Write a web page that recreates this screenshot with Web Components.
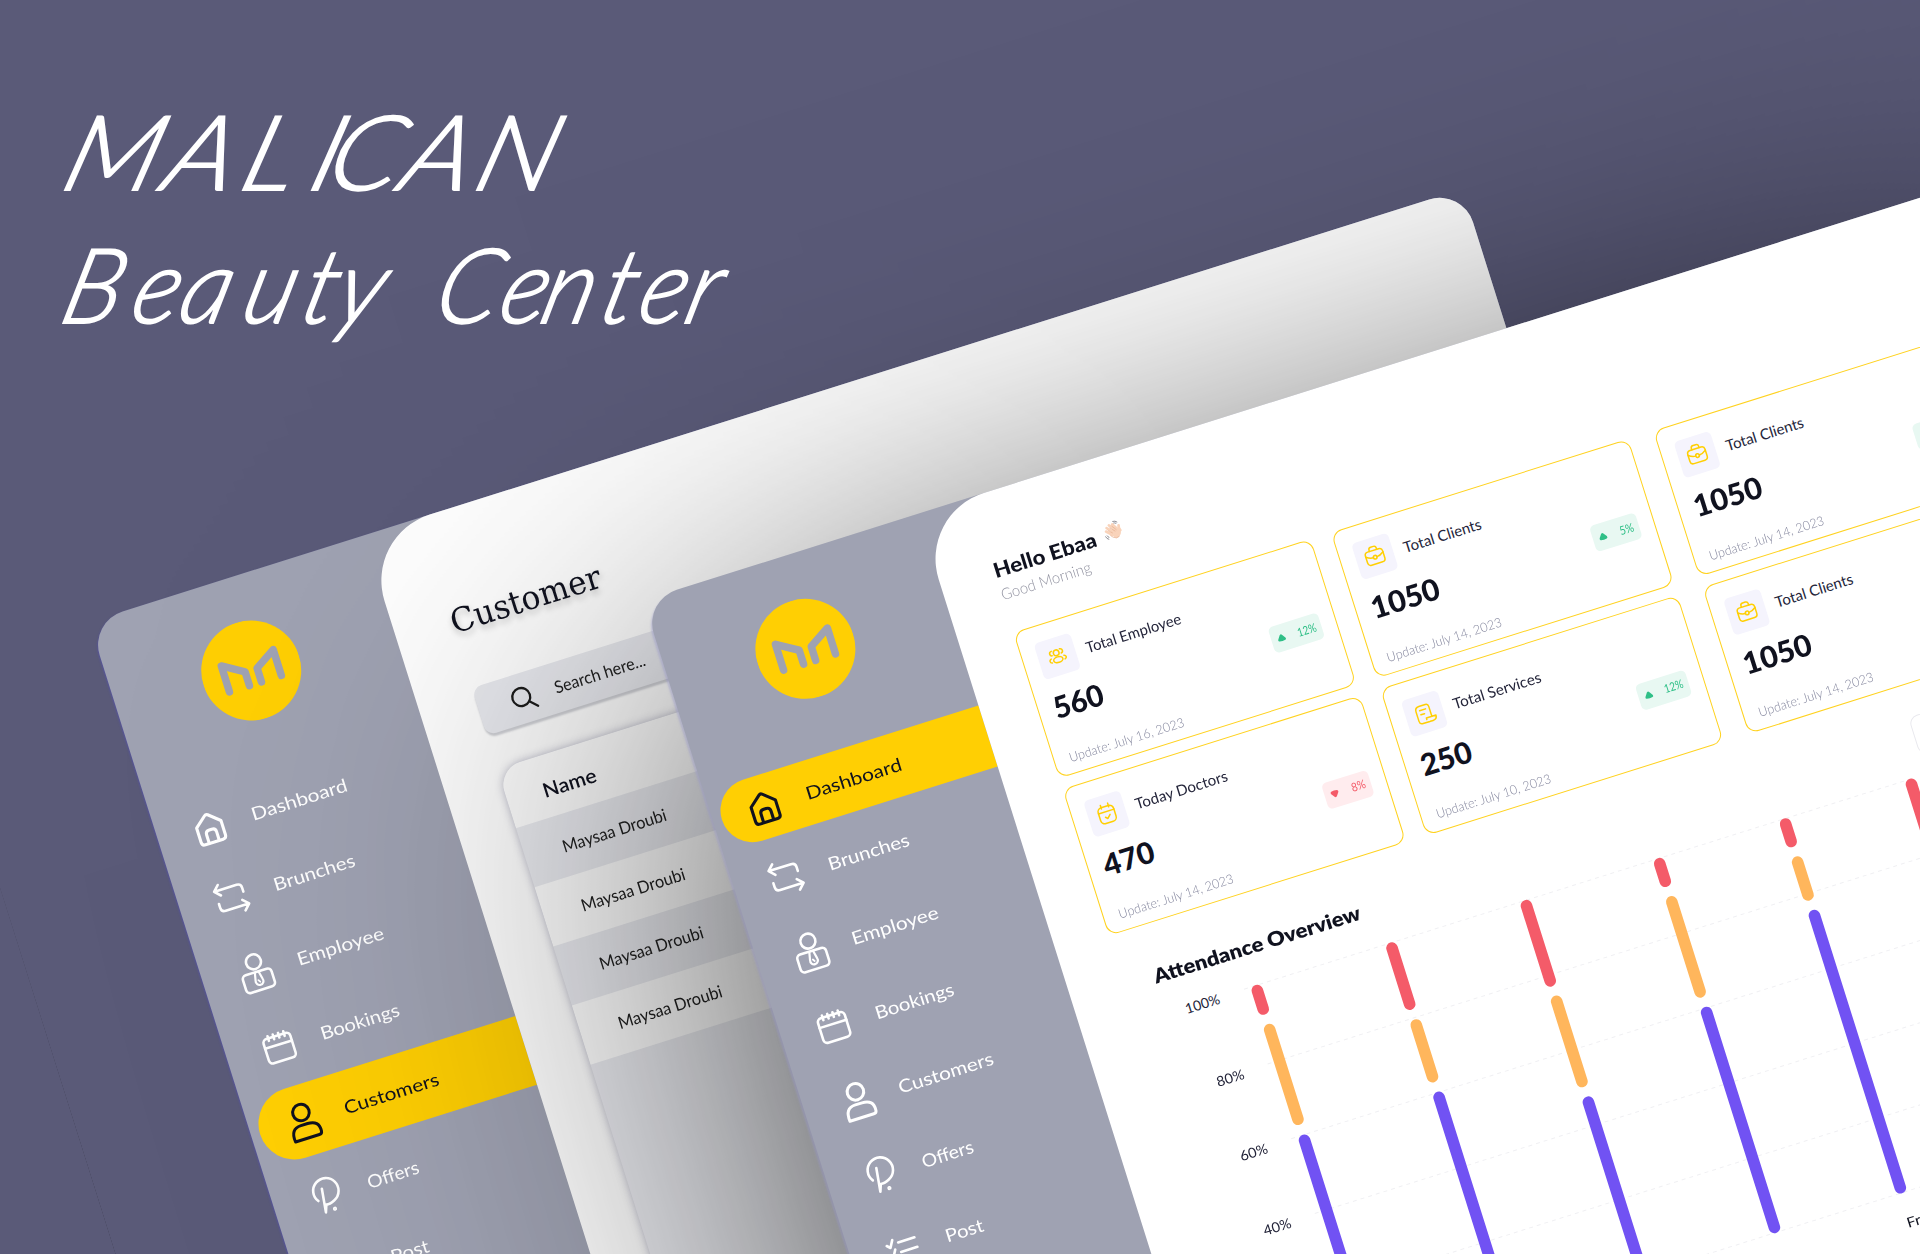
<!DOCTYPE html>
<html lang="en">
<head>
<meta charset="utf-8">
<title>MALICAN Beauty Center</title>
<style>
html,body{margin:0;padding:0}
body{width:1920px;height:1254px;overflow:hidden;background:#5a5a78;font-family:Lato,"Open Sans",sans-serif;color:#10121f}
</style>
</head>
<body>
<hero-scene></hero-scene>
<script>
const ICONS = {
  home:'<path d="M6.500 17 17.800 7.500q1.500-1.300 3.200 0L32 17V32q0 3.500-3.500 3.500H10q-3.500 0-3.500-3.500Z" stroke-width="3.100"/><path d="M14 35V26.500q0-4 4-4h2.500q4 0 4 4v8.500" stroke-width="3.100"/>',
  swap:'<path d="M32 17.500v-4q0-4.500-4.500-4.500H4.500M9.500 3.500 4 9l5.500 5.500M5 22v4q0 4.500 4.500 4.500H33.500M28.500 25l5.500 5.500-5.500 5.500" stroke-width="2.600"/>',
  employee:'<circle cx="20.500" cy="9.500" r="7.500"/><rect x="5" y="20" width="30" height="18.500" rx="4"/><path d="M18.500 20.500 16.800 28.500a3.900 3.900 0 1 0 7.400 0L22.500 20.500" stroke-width="2.200"/><path d="m19.700 28.500 1.300 2" stroke-width="1.800"/>',
  calendar:'<rect x="5.500" y="9" width="28" height="25.500" rx="4"/><path d="M5.500 18h28M11.500 6.700v4.800M17 6.700v4.800M22.500 6.700v4.800M28 6.700v4.800"/>',
  user:'<circle cx="20.500" cy="11.500" r="8.300" stroke-width="3"/><path d="M6.500 38q-1.500-14 10-14h7q12 0 11 11.500-.3 2.500-3 2.500Z" stroke-width="3"/>',
  offers:'<path d="M10.500 23.200A12.700 12.700 0 1 1 26 27.200Q20.500 29.800 17 29L14.300 36.300 17.500 12.500"/><circle cx="24" cy="35.500" r=".8" fill="currentColor"/>',
  post:'<path d="m4 12 3 3 4-7M16 12h17M4 22l3 3 4-7M16 22h17M4 32l3 3 4-7M16 32h17"/>',
  people:'<circle cx="20" cy="16" r="3"/><ellipse cx="20" cy="23.500" rx="5" ry="3"/><path d="M15.500 13q-2.500.3-2.500 2.400t2 2.400M24.500 13q2.500.3 2.500 2.400t-2 2.400M13 20.800q-1.900.5-1.900 2.100t1.900 2.100M27 20.800q1.900.5 1.900 2.100t-1.900 2.100" />',
  bag:'<rect x="10.500" y="13.500" width="19" height="14.500" rx="3.500"/><path d="M16 13.500v-1.500q0-2.500 2.500-2.500h3q2.500 0 2.500 2.500v1.500M10.500 18q4 3 7.500 3M29.500 18q-4 3-7.500 3"/><circle cx="20" cy="21" r="1.900"/>',
  check:'<rect x="11.500" y="12" width="17" height="17.500" rx="4.500"/><path d="M11.500 17.500h17M16 9.500v4M24 9.500v4M17.500 23l2 2 3.500-3.500"/>',
  scroll:'<path d="M23 29.500h-7.500q-3.500 0-3.500-3.500V15.500q0-4.500 4.500-4.500h7q3 0 3 3V25M16 15.500h6.500M16 20h4M20.500 26.500v-1.500h10.500q0 4.500-4.500 4.500h-3"/>',
  search:'<circle cx="11.500" cy="11.500" r="9"/><path d="m18 18 7 7"/>'
};
const def = (name, html, after) => customElements.define(name, class extends HTMLElement {
  constructor(){ super(); this.attachShadow({mode:'open'}); }
  connectedCallback(){
    if (this.ready) return; this.ready = true;
    this.shadowRoot.innerHTML = typeof html === 'function' ? html(this) : html;
    if (after) after(this);
  }
});

/* one line of text condensed or widened to an exact width */
def('fit-text', el => `<style>:host{display:inline-block;line-height:1;white-space:nowrap;width:${el.getAttribute('w')}px}
span{display:inline-block;transform-origin:0 50%}</style><span><slot></slot></span>`,
  el => { const s = el.shadowRoot.querySelector('span');
    s.style.transform = `scaleX(${el.getAttribute('w') / s.offsetWidth})`; });

def('ui-icon', el => { const s = el.getAttribute('size') || 40, v = el.getAttribute('box') || 40;
  return `<style>:host{display:block;flex:none;width:${s}px;height:${s}px}svg{display:block;overflow:visible}</style>
<svg width="${s}" height="${s}" viewBox="0 0 ${v} ${v}" fill="none" stroke="currentColor" stroke-width="${el.getAttribute('sw') || 2.6}" stroke-linecap="round" stroke-linejoin="round">${ICONS[el.getAttribute('name')]}</svg>`; });

def('brand-logo', `<style>:host{display:block;width:100px;height:100px}svg{display:block}</style>
<svg width="100" height="100" viewBox="-50 -50 100 100"><circle r="50" fill="#ffcf03"/>
<g fill="none" stroke="#9fa2b2" stroke-width="7.500" stroke-linecap="round" stroke-linejoin="round">
<path d="M-27.200 13.800V-13.300L-6.300-.5V14"/><path d="M27.200 13.800V-13.300L6.300-.5V14"/></g></svg>`);

def('nav-item', el => `<style>
:host{display:flex;align-items:center;height:77.900px;color:#fff;font-size:18px}
:host([first]){height:70.600px}
div{flex:1;display:flex;align-items:center;gap:23px;margin-left:9px;padding-left:25px;height:64px;border-radius:40px 0 0 40px}
:host([active]){color:#10121f}
:host([active]) div{background:#ffcf03;height:${el.getAttribute('tall') || 64}px}
</style><div><ui-icon name="${el.getAttribute('icon')}"></ui-icon><fit-text w="${el.getAttribute('w')}"><slot></slot></fit-text></div>`);

def('side-bar', el => {
  const items = [['home','Dashboard',100],['swap','Brunches',84.500],['employee','Employee',90],['calendar','Bookings',82.500],['user','Customers',99],['offers','Offers',53.500],['post','Post',39.500]];
  const act = el.getAttribute('active');
  return `<style>:host{display:flex;flex-direction:column;width:288.400px;flex:none}
brand-logo{margin:45px 0 52.200px 90px}
</style><brand-logo></brand-logo>` + items.map((i, n) =>
  `<nav-item icon="${i[0]}" w="${i[2]}" ${n ? '' : 'first'} ${i[1] === act ? 'active' : ''} ${n ? 'tall="71.500"' : ''}>${i[1]}</nav-item>`).join(''); });

def('app-window', `<style>
:host{display:flex;position:absolute;width:1440px;height:1300px;border-radius:35px;overflow:visible;background:#9fa2b2}
.panel{flex:1;border-radius:69px 35px 35px 0;background:#fff;min-width:0;box-sizing:border-box}
</style><slot name="side"></slot><div class="panel"><slot></slot></div>`);

/* soft shade of a 1440px wide window: product of a horizontal and a vertical gaussian edge */
def('soft-shade', () => {
  const W = 1440, M = 700;
  const phi = z => 1 / (1 + Math.exp(-1.5976 * z - .07056 * z * z * z));
  const ramp = (len, both, S) => { const lo = phi(-M / S), f = d => Math.max(0, (phi(d / S) - lo) / (1 - 2 * lo)).toFixed(5), out = [];
    for (let d = -M; d <= M; d += 28) out.push(`rgba(0,0,0,${f(d)}) ${M + d}px`);
    if (both) for (let d = M; d >= -M; d -= 28) out.push(`rgba(0,0,0,${f(d)}) ${M + len - d}px`);
    return out.join(','); };
  const m = `linear-gradient(90deg,${ramp(W, true, 225)}),linear-gradient(180deg,${ramp(0, false, 180)})`;
  return `<style>:host{display:block;position:absolute;left:${432.500 - M}px;top:${766.400 + 95 - M}px;width:${W + 2 * M}px;height:2200px;background:rgba(0,0,0,.75);
-webkit-mask-image:${m};-webkit-mask-composite:source-in;mask-image:${m};mask-composite:intersect}</style>`; });

def('customer-view', () => {
  const row = '<div class="row"><fit-text w="108">Maysaa Droubi</fit-text></div>';
  return `<style>
:host{display:flex;flex-direction:column;padding:93.500px 0 0 56.500px}
h1{margin:0;font:400 33px/1 "DejaVu Serif",serif;text-shadow:0 4px 7px rgba(0,0,0,.25)}
.search{margin-top:51.500px;height:50px;width:600px;border-radius:10px;background:#e9eaef;display:flex;align-items:center;padding-left:33px;gap:20px;font-size:17px;color:#222;box-shadow:0 3px 2px #cfd0d5}
.search ui-icon{color:#1c1c1c}
.table{margin-top:35px;width:1000px;height:900px;border-radius:24px;background:#ebecf1;overflow:hidden;box-shadow:0 0 9px rgba(60,60,100,.36)}
.table>div{display:flex;align-items:center;padding-left:39.500px;box-sizing:border-box;height:61.900px;font-size:17px;color:#222}
.table>.head{height:62.500px;font-size:20px;font-weight:600;padding:6px 0 0 37.500px;background:#fff;color:#10121f}
.table>.row:nth-child(odd){background:#fff}
</style><h1><fit-text w="156">Customer</fit-text></h1>
<div class="search"><ui-icon name="search" size="26" box="26" sw="2.300"></ui-icon><fit-text w="95">Search here...</fit-text></div>
<div class="table"><div class="head"><fit-text w="55">Name</fit-text></div>${row.repeat(4)}</div>`; });

def('trend-badge', el => { const down = el.hasAttribute('down'), t = el.getAttribute('value');
  return `<style>:host{display:flex;align-items:center;justify-content:center;gap:${t === '12%' ? 12 : 13}px;box-sizing:border-box;width:${t === '12%' ? 52 : 48}px;height:27px;border-radius:5px;
background:${down ? '#ffecee' : '#e8f8f2'};color:${down ? '#f45b69' : '#2fbf87'};font-size:12px;font-weight:400}svg{display:block}</style>
<svg width="9" height="9" viewBox="0 0 9 9"><path fill="currentColor" stroke="currentColor" stroke-width="3" stroke-linejoin="round" d="${down ? 'M2 2.900q2.500-.8 5 0L4.500 6.400Z' : 'M2 6.300q2.500.8 5 0L4.500 2.700Z'}"/></svg>
${t ? `<fit-text w="${t === '12%' ? 20 : 15}">${t}</fit-text>` : ''}`; });

def('stat-card', el => { const g = k => el.getAttribute(k);
  return `<style>:host{display:flex;flex-direction:column;box-sizing:border-box;width:312.200px;height:153.400px;border:1.200px solid #ffd21f;border-radius:11px;padding:16.500px 15px 0 15px}
.top{display:flex;align-items:center;gap:11px;font-size:15px;color:#24253a}
.ic{width:38px;height:38px;border-radius:5px;background:#f5f4fd;color:#ffcf03;display:flex;align-items:center;justify-content:center}
.mid{display:flex;align-items:center;justify-content:space-between;height:30px;margin-top:15.500px;font-size:30px;font-weight:900}
.mid>fit-text{margin-top:-3px}
.up{margin-top:27px;font-size:13px;font-weight:300;color:#86889f;height:14px}
</style><div class="top"><div class="ic"><ui-icon name="${g('icon')}" size="38" sw="1.600"></ui-icon></div><fit-text w="${g('lw')}">${g('label')}</fit-text></div>
<div class="mid"><fit-text w="${g('nw')}">${g('num')}</fit-text>${el.hasAttribute('trend') ? `<trend-badge value="${g('trend')}" ${el.hasAttribute('down') ? 'down' : ''}></trend-badge>` : ''}</div>
<div class="up"><fit-text w="120">Update: ${g('date')}</fit-text></div>`; });

def('attendance-chart', () => {
  const bars = [[179.300,31,41,146.600,157],[320.500,70.400,80.600,146.400,156.500],[461.500,90.400,100.300,196,206],[601.200,30,40,146,156],[733.200,30,40,86,96],[865.200,90,100,196,206]];
  const seg = (x, a, b, c) => `<rect x="${x - 167 - 5.800}" y="${a}" width="11.600" height="${b - a}" rx="5.800" fill="${c}"/>`;
  return `<style>:host{display:block}
h2{margin:0;font-size:20px;font-weight:800;line-height:1}
.plot{display:flex;gap:25.500px;margin-top:28.800px}
.axis{display:flex;flex:none;flex-direction:column;align-items:flex-end;width:56px;margin-top:-4.300px;font-size:14px;color:#24253a}
.axis fit-text{height:14px;margin-bottom:64.200px}
svg{display:block;overflow:visible}
.days{font-size:14px;padding-left:562px;margin-top:21px}
</style><h2><fit-text w="216">Attendance Overview</fit-text></h2>
<div class="plot"><div class="axis"><fit-text w="36">100%</fit-text><fit-text w="28">80%</fit-text><fit-text w="28">60%</fit-text><fit-text w="28">40%</fit-text></div>
<div><svg width="760" height="393">${[0,1,2,3,4,5].map(i => `<path d="M0 ${i * 78.400 + .5}H700" stroke="#f0f0f3" stroke-dasharray="4 4"/>`).join('')}
${bars.map(b => seg(b[0], 0, b[1], '#f45b69') + seg(b[0], b[2], b[3], '#ffb65c') + seg(b[0], b[4], 393, '#7152f3')).join('')}</svg>
<div class="days"><fit-text w="18">Fri</fit-text></div></div></div>`; });

def('dashboard-view', `<style>
:host{display:flex;flex-direction:column;padding:66.500px 0 0 54.800px}
.hi{display:flex;align-items:center;gap:9px;font-size:20.500px;font-weight:900;height:20px}
.sub{font-size:15.500px;font-weight:300;color:#9293a1;margin-top:6.500px;height:16px}
.hi svg{margin-top:-4px}
.cards{display:grid;grid-template-columns:332.800px 338px 312px;row-gap:11.200px;margin-top:32.500px}
.low{display:flex;align-items:flex-start;margin-top:41.500px}
attendance-chart{width:768px;flex:none;margin:0 0 0 31px;padding-top:.5px}
.tile{margin:-9px 0 0 29px;width:120px;flex:none;height:40px;box-sizing:border-box;border:1px solid #e9e9ee;border-radius:9px}
</style>
<div class="hi"><fit-text w="107">Hello Ebaa</fit-text>
<svg width="20" height="20" viewBox="0 0 20 20"><g fill="none" stroke="#f9d3ba" stroke-linecap="round"><path stroke-width="2.600" d="M3 8.500l5 5M4.500 5.500l6 6M7.500 3.500l5 6M11 3.500l3 5"/><path stroke-width="2.800" d="M16.800 6.500q-1 2 .2 5"/></g><path d="M6 11 13 6.500l3.500 3q2 4-1.500 7t-6-.5Z" fill="#f9d3ba"/><path d="M6 13.500 8 16q3 3 6.500 1" fill="none" stroke="#e8b596" stroke-width=".7"/><path d="M5 8l4 4M7.500 6l4.500 5M10 5l3.500 5" stroke="#e3ae8e" stroke-width=".6"/><path d="M12 .8q3 0 4.500 2.200M12.500 2.600q1.500 0 2.700 1.300M1 13q.3 2.700 2.700 4M2.700 12.600q.3 1.700 1.700 2.600" fill="none" stroke="#8f8f96" stroke-width=".9"/></svg></div>
<div class="sub"><fit-text w="94">Good Morning</fit-text></div>
<div class="cards">
<stat-card icon="people" label="Total Employee" lw="99" num="560" nw="51" date="July 16, 2023" trend="12%"></stat-card>
<stat-card icon="bag" label="Total Clients" lw="81" num="1050" nw="71" date="July 14, 2023" trend="5%"></stat-card>
<stat-card icon="bag" label="Total Clients" lw="81" num="1050" nw="71" date="July 14, 2023" trend=""></stat-card>
<stat-card icon="check" label="Today Doctors" lw="96" num="470" nw="52" date="July 14, 2023" trend="8%" down></stat-card>
<stat-card icon="scroll" label="Total Services" lw="92" num="250" nw="52" date="July 10, 2023" trend="12%"></stat-card>
<stat-card icon="bag" label="Total Clients" lw="81" num="1050" nw="71" date="July 14, 2023"></stat-card>
</div>
<div class="low"><attendance-chart></attendance-chart><div class="tile"></div></div>`);

def('hero-title', () => {
  const line = (y, k, a, t) => `<g transform="translate(0 ${y}) scale(${k} 1) skewX(-16)"><text x="${a.map(v => (v / k).toFixed(1)).join(' ')}" y="0">${t}</text></g>`;
  return `<style>:host{display:block}svg{display:block}text{font:italic 300 104px Lato,sans-serif;fill:#fff;stroke:#fff;stroke-width:1.800px}</style>
<svg width="800" height="460">
${line(190, 1.08, [58,159,236,305,322,396,470], 'MALICAN')}
${line(323, .95, [57,127,175,238,297,331,400,430,495,537,596,634,681], 'Beauty Center')}</svg>`; });

def('hero-scene', `<style>
:host{display:block;position:relative;width:1920px;height:1254px;overflow:hidden;background:#5a5a78}
.stage{position:absolute;left:0;top:0;width:10px;height:10px;transform:rotate(-17.500deg);transform-origin:0 0}
.w1{left:-102px;top:619.700px;box-shadow:-1px 1px 2px rgba(84,80,180,.6)}
.w2{left:433px;top:766.400px;box-shadow:-2px 2px 2px rgba(150,150,200,.45)}
hero-title{position:absolute;left:0;top:0}
</style>
<div class="stage">
<app-window class="w1"><side-bar slot="side" active="Customers"></side-bar><customer-view></customer-view></app-window>
<soft-shade></soft-shade>
<app-window class="w2"><side-bar slot="side" active="Dashboard"></side-bar><dashboard-view></dashboard-view></app-window>
</div>
<hero-title></hero-title>`);
</script>
</body>
</html>
